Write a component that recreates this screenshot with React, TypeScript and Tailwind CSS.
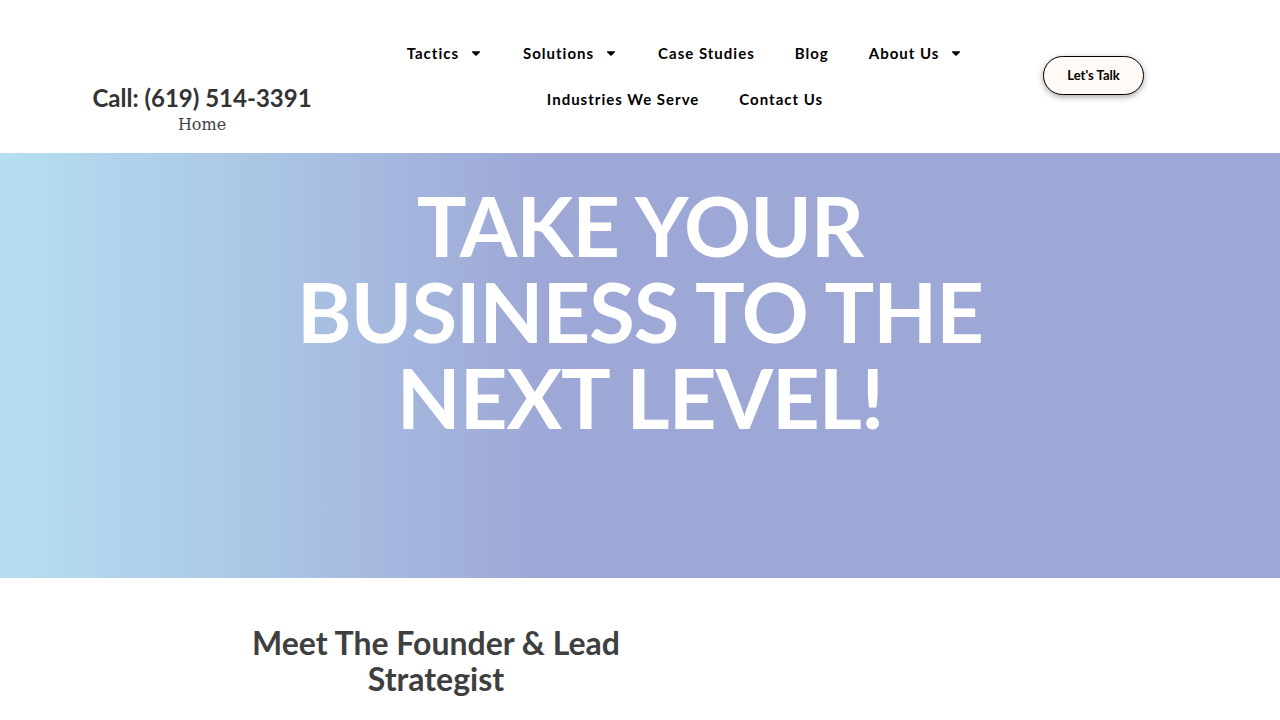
import { FaCaretDown } from "react-icons/fa";

const row1 = [
  { label: "Tactics", caret: true },
  { label: "Solutions", caret: true },
  { label: "Case Studies", caret: false },
  { label: "Blog", caret: false },
  { label: "About Us", caret: true },
];

const row2 = [
  { label: "Industries We Serve", caret: false },
  { label: "Contact Us", caret: false },
];

const NavItem = ({ label, caret }: { label: string; caret: boolean }) => (
  <a className="flex items-center h-[30px] px-5 text-[15px] font-bold tracking-[1px] text-black">
    {label}
    {caret && <FaCaretDown className="ml-[10px] text-[14px]" />}
  </a>
);

export default function App() {
  return (
    <div className="min-h-[720px] bg-white font-['Lato',sans-serif]">
      {/* Header */}
      <header className="h-[153px] w-[1140px] mx-auto flex">
        <div className="w-[264px] pt-[83px] flex flex-col items-center">
          <div className="text-[24px] leading-[30px] font-bold text-[#333]">Call: (619) 514-3391</div>
          <div className="text-[16px] leading-[24px] text-[#444] font-['DejaVu_Serif',serif]">Home</div>
        </div>

        <nav className="w-[702px] pt-[38px] flex flex-col items-center gap-y-[16px]">
          <div className="flex">
            {row1.map((item) => (
              <NavItem key={item.label} {...item} />
            ))}
          </div>
          <div className="flex">
            {row2.map((item) => (
              <NavItem key={item.label} {...item} />
            ))}
          </div>
        </nav>

        <div className="flex-1 pt-[56px] pl-[7px]">
          <button className="h-[39px] w-[101px] rounded-full border border-black bg-[#fffaf5] text-[13px] font-bold text-black shadow-[0_2px_6px_rgba(0,0,0,0.35)]">
            Let's Talk
          </button>
        </div>
      </header>

      {/* Hero */}
      <section className="h-[425px] bg-[linear-gradient(90deg,#b5dff0_0%,#abc6e5_20%,#9ea8d6_42%,#9ea8d6_100%)] pt-[29px]">
        <h1 className="text-center text-white font-bold uppercase text-[83px] leading-[86px] tracking-[-1px]">
          Take Your
          <br />
          Business to the
          <br />
          Next Level!
        </h1>
      </section>

      {/* Founder */}
      <section className="w-[1140px] mx-auto">
        <div className="w-1/2 pl-[162px] pt-[47px]">
          <h2 className="text-center text-[32px] leading-[36px] font-bold text-[#3f3f3f]">
            Meet The Founder &amp; Lead Strategist
          </h2>
        </div>
      </section>
    </div>
  );
}
